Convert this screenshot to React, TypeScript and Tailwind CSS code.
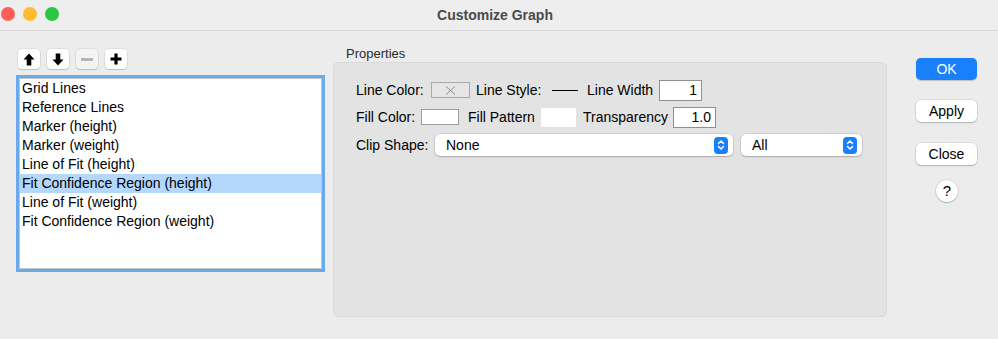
import React from "react";

const ITEMS = [
  "Grid Lines",
  "Reference Lines",
  "Marker (height)",
  "Marker (weight)",
  "Line of Fit (height)",
  "Fit Confidence Region (height)",
  "Line of Fit (weight)",
  "Fit Confidence Region (weight)",
];

function Stepper() {
  return (
    <span className="flex h-[17px] w-[14px] items-center justify-center rounded-[4px] bg-[#1a7ffa]">
      <svg width="8" height="12" viewBox="0 0 8 12" fill="none">
        <path d="M1.5 4.5 L4 2 L6.5 4.5" stroke="white" strokeWidth="1.5" strokeLinecap="round" strokeLinejoin="round" />
        <path d="M1.5 7.5 L4 10 L6.5 7.5" stroke="white" strokeWidth="1.5" strokeLinecap="round" strokeLinejoin="round" />
      </svg>
    </span>
  );
}

function Select({ value, width }: { value: string; width: string }) {
  return (
    <div
      className={`flex h-[22px] ${width} items-center justify-between rounded-[5px] bg-white pl-[11px] pr-[5px] shadow-[0_0_0_0.5px_rgba(0,0,0,0.16),0_1px_1.5px_rgba(0,0,0,0.18)]`}
    >
      <span>{value}</span>
      <Stepper />
    </div>
  );
}

function ToolButton({ children, disabled }: { children: React.ReactNode; disabled?: boolean }) {
  return (
    <div
      className={`flex h-[20px] w-[22px] items-center justify-center rounded-[4px] shadow-[0_0_0_0.5px_rgba(0,0,0,0.12),0_1px_1px_rgba(0,0,0,0.15)] ${
        disabled ? "bg-[#f4f4f4]" : "bg-white"
      }`}
    >
      {children}
    </div>
  );
}

function DialogButton({ label, primary }: { label: string; primary?: boolean }) {
  return (
    <div
      className={`flex h-[22px] w-[61px] items-center justify-center rounded-[5px] ${
        primary
          ? "bg-[#1a7ffa] text-white shadow-[0_0.5px_1px_rgba(0,0,0,0.2)]"
          : "bg-white text-black shadow-[0_0_0_0.5px_rgba(0,0,0,0.14),0_1px_1.5px_rgba(0,0,0,0.18)]"
      }`}
    >
      {label}
    </div>
  );
}

export default function App() {
  return (
    <div className="flex h-[339px] w-[998px] flex-col bg-[#ececec] font-['Liberation_Sans',Arial,sans-serif] text-[14px] text-black">
      {/* title bar */}
      <div className="relative flex h-[31px] items-center justify-center border-b border-[#d6d6d6] bg-[#eeeeee] pr-[8px]">
        <div className="absolute left-[1px] top-[7px] flex gap-[8px]">
          <span className="h-[14px] w-[14px] rounded-full bg-[#ff5f57]" />
          <span className="h-[14px] w-[14px] rounded-full bg-[#febc2e]" />
          <span className="h-[14px] w-[14px] rounded-full bg-[#28c840]" />
        </div>
        <span className="text-[14px] font-bold text-[#4a4a4a]">Customize Graph</span>
      </div>

      <div className="flex">
        {/* left column */}
        <div className="ml-[16px] mt-[18px] w-[309px]">
          <div className="ml-[2px] flex gap-[7px]">
            <ToolButton>
              <svg width="12" height="13" viewBox="0 0 12 13">
                <path d="M6 0.5 L11.5 6.5 H8.3 V12.5 H3.7 V6.5 H0.5 Z" fill="black" />
              </svg>
            </ToolButton>
            <ToolButton>
              <svg width="12" height="13" viewBox="0 0 12 13">
                <path d="M6 12.5 L11.5 6.5 H8.3 V0.5 H3.7 V6.5 H0.5 Z" fill="black" />
              </svg>
            </ToolButton>
            <ToolButton disabled>
              <span className="h-[3px] w-[12px] bg-[#b4b4b4]" />
            </ToolButton>
            <ToolButton>
              <svg width="12" height="12" viewBox="0 0 12 12">
                <path d="M4.4 0.5 H7.6 V4.4 H11.5 V7.6 H7.6 V11.5 H4.4 V7.6 H0.5 V4.4 H4.4 Z" fill="black" />
              </svg>
            </ToolButton>
          </div>
          <div className="mt-[6px] h-[197px] border-[3px] border-[#6aa9ec]">
            <div className="h-full border border-[#c4c4c4] bg-white">
              {ITEMS.map((item, i) => (
                <div
                  key={item}
                  className={`h-[19px] pl-[2px] leading-[19px] ${i === 5 ? "bg-[#b4d7fe]" : ""}`}
                >
                  {item}
                </div>
              ))}
            </div>
          </div>
        </div>

        {/* properties */}
        <div className="ml-[8px] mt-[15px]">
          <div className="h-[16px] pl-[13px] text-[13px] leading-[16px] text-[#2a2a2a]">Properties</div>
          <div className="h-[255px] w-[554px] rounded-[5px] border border-[#d9d9d9] bg-[#e3e3e3] pl-[22px] pt-[16px]">
            <div className="flex h-[22px] items-center">
              <span className="w-[75px]">Line Color:</span>
              <span className="flex h-[16px] w-[39px] items-center justify-center border border-[#a9a9a9] bg-[#e6e6e6]">
                <svg width="11" height="9" viewBox="0 0 11 9">
                  <path d="M1 0.5 L10 8.5 M10 0.5 L1 8.5" stroke="#8a8a8a" strokeWidth="1" />
                </svg>
              </span>
              <span className="ml-[6px] w-[76px]">Line Style:</span>
              <span className="h-px w-[26px] bg-black" />
              <span className="ml-[9px] w-[72px]">Line Width</span>
              <span className="h-[21px] w-[43px] border border-[#8f8f8f] bg-white pr-[4px] text-right leading-[19px]">1</span>
            </div>
            <div className="mt-[5px] flex h-[22px] items-center">
              <span className="w-[65px]">Fill Color:</span>
              <span className="h-[16px] w-[38px] border border-[#9c9c9c] bg-white" />
              <span className="ml-[9px] w-[73px]">Fill Pattern</span>
              <span className="h-[19px] w-[35px] bg-white" />
              <span className="ml-[7px] w-[90px]">Transparency</span>
              <span className="h-[21px] w-[43px] border border-[#8f8f8f] bg-white pr-[4px] text-right leading-[19px]">1.0</span>
            </div>
            <div className="mt-[6px] flex h-[22px] items-center">
              <span className="w-[79px]">Clip Shape:</span>
              <Select value="None" width="w-[298px]" />
              <div className="ml-[8px]">
                <Select value="All" width="w-[121px]" />
              </div>
            </div>
          </div>
        </div>

        {/* buttons */}
        <div className="ml-[29px] mt-[27px] flex flex-col">
          <DialogButton label="OK" primary />
          <div className="mt-[20px]">
            <DialogButton label="Apply" />
          </div>
          <div className="mt-[21px]">
            <DialogButton label="Close" />
          </div>
          <div className="ml-[20px] mt-[15px] flex h-[22px] w-[22px] items-center justify-center rounded-full bg-white text-[15px] shadow-[0_0_0_0.5px_rgba(0,0,0,0.14),0_1px_1.5px_rgba(0,0,0,0.18)]">
            ?
          </div>
        </div>
      </div>
    </div>
  );
}
